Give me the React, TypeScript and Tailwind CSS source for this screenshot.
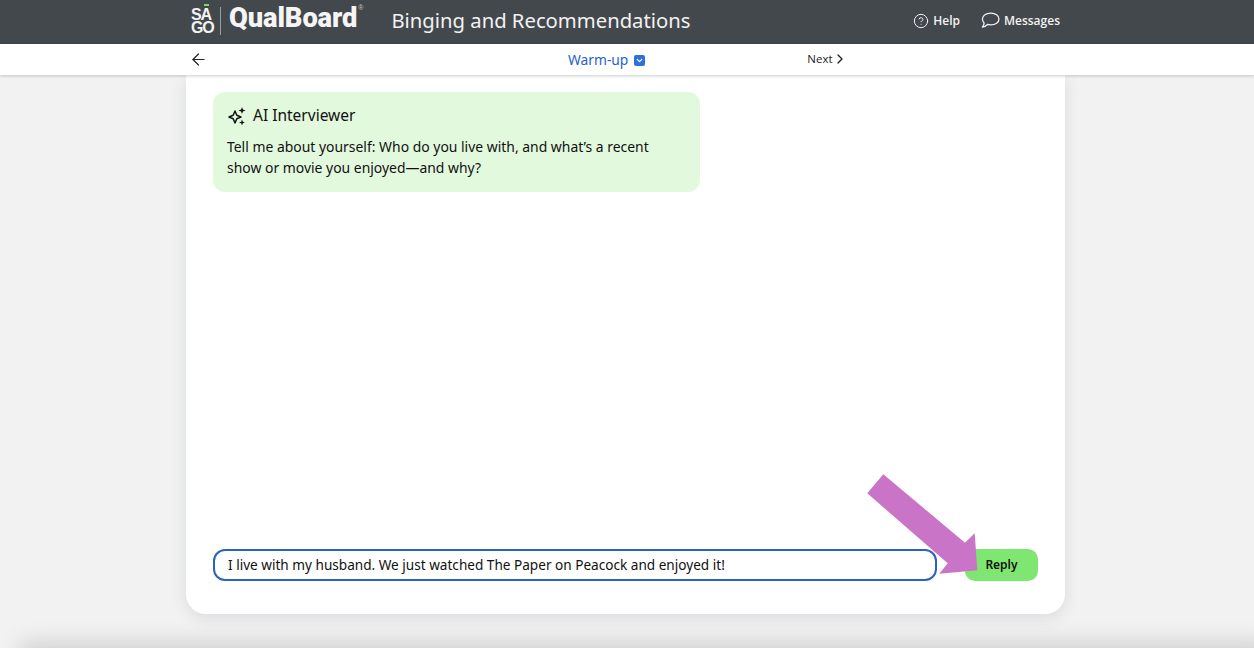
import { ArrowLeft, ChevronRight, ChevronDown, CircleHelp } from "lucide-react";

const Sparkle = () => (
  <svg width="20" height="20" viewBox="0 0 20 20" fill="none" className="mt-[2px]">
    <path d="M8 5 L9.8 9.2 L14 11 L9.8 12.8 L8 17 L6.2 12.8 L2 11 L6.2 9.2 Z" stroke="#111" strokeWidth="1.5" strokeLinejoin="round" />
    <path d="M15 1 L15.9 3.6 L18.5 4.5 L15.9 5.4 L15 8 L14.1 5.4 L11.5 4.5 L14.1 3.6 Z" fill="#111" />
    <path d="M15 13.5 L15.8 15.7 L18 16.5 L15.8 17.3 L15 19.5 L14.2 17.3 L12 16.5 L14.2 15.7 Z" fill="#111" />
  </svg>
);

const Bubble = () => (
  <svg width="19" height="17" viewBox="0 0 19 17" fill="none" stroke="#f2f2f2" strokeWidth="1.3" strokeLinejoin="round">
    <path d="M9.8 1.2 C14.4 1.2 18 3.6 18 7 C18 10.4 14.4 12.8 9.8 12.8 C8.6 12.8 7.5 12.7 6.5 12.4 C5 13.8 3.2 14.8 1.4 15.2 C2.4 14 3 12.6 3.1 11 C2 9.9 1.4 8.5 1.4 7 C1.4 3.6 5.2 1.2 9.8 1.2 Z" />
  </svg>
);

const Header = () => (
  <header className="h-11 bg-[#43484d] text-white shrink-0">
    <div className="ml-[191px] w-[869px] h-full flex items-center">
      {/* logo */}
      <div className="relative w-[20px] font-['Liberation_Sans',sans-serif] font-bold text-[16px] leading-[13px] tracking-[-1.2px] text-[#f2f2f2] mb-[3px]">
        <span className="absolute left-[13px] top-[-4px] w-[5px] h-[2px] bg-[#7fd66f]"></span>
        SA
        <br />
        GO
      </div>
      <div className="w-px h-7 bg-[#9a9ea2] ml-[9px] mr-[8px] mb-[2px]"></div>
      <span className="font-['Roboto',sans-serif] font-black text-[27.3px] leading-none text-[#f5f5f5] mb-[7px] tracking-[-0.1px]">QualBoard</span>
      <span className="text-[7px] self-start mt-[3px] ml-[1px] text-[#c8c8c8] font-['Liberation_Sans',sans-serif]">®</span>
      <h1 className="ml-[28px] text-[20.25px] text-[#f2f2f2] font-['Noto_Sans',sans-serif] mb-[4px]">Binging and Recommendations</h1>
      <div className="ml-auto flex items-center font-['Open_Sans',sans-serif] font-semibold text-[12px] text-[#f2f2f2] mb-[3px]">
        <CircleHelp size={16} strokeWidth={1.5} />
        <span className="ml-[4px]">Help</span>
        <span className="ml-[21px]"><Bubble /></span>
        <span className="ml-[4px]">Messages</span>
      </div>
    </div>
  </header>
);

const SubNav = () => (
  <nav className="h-[31px] bg-white shadow-[0_1px_3px_rgba(0,0,0,0.2)] shrink-0 relative z-10 flex items-center pl-[189px]">
    <ArrowLeft size={19} strokeWidth={1.5} className="text-[#222]" />
    <div className="ml-[360px] mt-[1px] flex items-center text-[#2463cf] text-[13.8px] font-['Noto_Sans',sans-serif]">
      Warm-up
      <span className="ml-[6px] w-[11px] h-[11px] rounded-[2px] bg-[#2f6fdc] flex items-center justify-center">
        <ChevronDown size={9} strokeWidth={3.5} className="text-white" />
      </span>
    </div>
    <div className="ml-[162px] mb-[1px] flex items-center text-[11.5px] text-[#222] font-['Open_Sans',sans-serif]">
      Next
      <ChevronRight size={16} strokeWidth={2} className="ml-[-1px]" />
    </div>
  </nav>
);

const Arrow = () => (
  <svg className="absolute left-[860px] top-[470px] z-20" width="125" height="110" viewBox="860 470 125 110">
    <polygon points="883.3,474.3 867.3,493.3 947.7,563.3 939.3,573.7 977.3,570.3 974.7,533.3 965,542.7" fill="#c974c6" />
  </svg>
);

export default function App() {
  return (
    <div className="relative h-[648px] w-full overflow-hidden bg-[#f2f2f2] flex flex-col font-['Noto_Sans',sans-serif]">
      <Header />
      <SubNav />
      <main className="ml-[186px] w-[879px] h-[539px] bg-white rounded-b-[20px] shadow-[0_4px_16px_rgba(60,70,90,0.13)] px-[27px] pt-[17px] pb-[33px] flex flex-col justify-between">
        <section className="w-[487px] h-[100px] bg-[#e2f9de] rounded-xl px-[14px] pt-[11px] text-[#111]">
          <div className="flex items-center gap-[6px] text-[15.5px] leading-6">
            <Sparkle />
            AI Interviewer
          </div>
          <p className="mt-[9px] text-[13.93px] leading-[21px]">
            Tell me about yourself: Who do you live with, and what’s a recent
            <br />
            show or movie you enjoyed—and why?
          </p>
        </section>
        <div className="flex items-stretch gap-[28px] h-8">
          <div className="w-[724px] border-2 border-[#2a62c4] rounded-xl bg-white flex items-center px-[13px] text-[13.6px] text-[#111]">
            I live with my husband. We just watched The Paper on Peacock and enjoyed it!
          </div>
          <button className="w-[73px] bg-[#80e672] rounded-[10px] text-[12px] font-semibold text-[#111]">Reply</button>
        </div>
      </main>
      {/* footer edge just below the fold */}
      <div className="absolute left-[20px] right-[-20px] top-[648px] h-10 shadow-[0_-4px_24px_rgba(0,0,0,0.16)]"></div>
      <Arrow />
    </div>
  );
}
